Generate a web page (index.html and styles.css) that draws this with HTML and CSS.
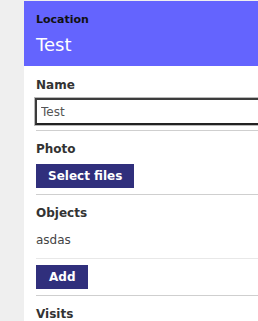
FILE: index.html
```html
<!DOCTYPE html>
<html lang="en">
<head>
  <meta charset="UTF-8" />
  <meta name="viewport" content="width=device-width, initial-scale=1.0" />
  <title>Location</title>
  <link rel="stylesheet" href="styles.css">
</head>
<body>
  <main class="panel">
    <header class="panel-head">
      <div class="kind">Location</div>
      <div class="title">Test</div>
    </header>

    <section class="field">
      <label class="label label-input" for="name">Name</label>
      <input class="text-input" id="name" type="text" value="Test" />
    </section>

    <section class="field">
      <div class="label">Photo</div>
      <button class="btn">Select files</button>
    </section>

    <section class="field">
      <div class="label">Objects</div>
      <ul class="object-list">
        <li>asdas</li>
      </ul>
      <button class="btn btn-add">Add</button>
    </section>

    <section class="field">
      <div class="label">Visits</div>
    </section>
  </main>
</body>
</html>
```

FILE: styles.css
```css
:root {
  --bg: #efefef;
  --head: #6464fe;
  --btn: #302f7c;
  --label: #333;
  --line: #cfcfcf;
}

html, body {
  overflow: hidden;
}

body {
  margin: 0;
  background: var(--bg);
  font-family: 'DejaVu Sans', Verdana, sans-serif;
  color: var(--label);
}

.panel {
  margin: 1px 0 0 24px;
  width: 320px;
  background: #fff;
  min-height: 400px;
}

.panel-head {
  background: var(--head);
  padding: 12px 12px 10px;
}

.kind {
  font-size: 11px;
  line-height: 13px;
  font-weight: bold;
  color: #111;
}

.title {
  margin-top: 8px;
  font-size: 18px;
  line-height: 22px;
  color: #fff;
}

.field {
  margin-left: 12px;
  padding: 12px 0 6px;
  border-bottom: 1px solid var(--line);
}

.field + .field {
  padding-top: 11px;
}

.label {
  display: block;
  font-size: 12px;
  line-height: 14px;
  font-weight: bold;
  margin-bottom: 8px;
}

.label-input {
  margin-bottom: 6px;
}

.text-input {
  display: block;
  box-sizing: border-box;
  margin: 0 0 0 -1px;
  width: 320px;
  height: 27px;
  padding: 0 4px;
  border: 2px solid #3c3c3c;
  border-right-color: #555;
  border-bottom-color: #222;
  box-shadow: 0 0 0 1px #b8b8b8;
  font-family: 'DejaVu Sans', Verdana, sans-serif;
  font-size: 12px;
  color: #555;
  outline: none;
}

.field:first-of-type .text-input {
  margin-bottom: -1px;
}

.btn {
  display: block;
  height: 24px;
  padding: 0 12px;
  border: none;
  border-radius: 0;
  background: var(--btn);
  color: #fff;
  font-family: 'DejaVu Sans', Verdana, sans-serif;
  font-size: 12px;
  font-weight: bold;
}

.object-list {
  list-style: none;
  margin: 0;
  padding: 0;
}

.object-list li {
  font-size: 12px;
  line-height: 14px;
  color: #444;
  padding: 5px 0 11px;
  border-bottom: 1px solid #e8e8e8;
}

.btn-add {
  margin-top: 6px;
  padding: 0 13px;
}
```
